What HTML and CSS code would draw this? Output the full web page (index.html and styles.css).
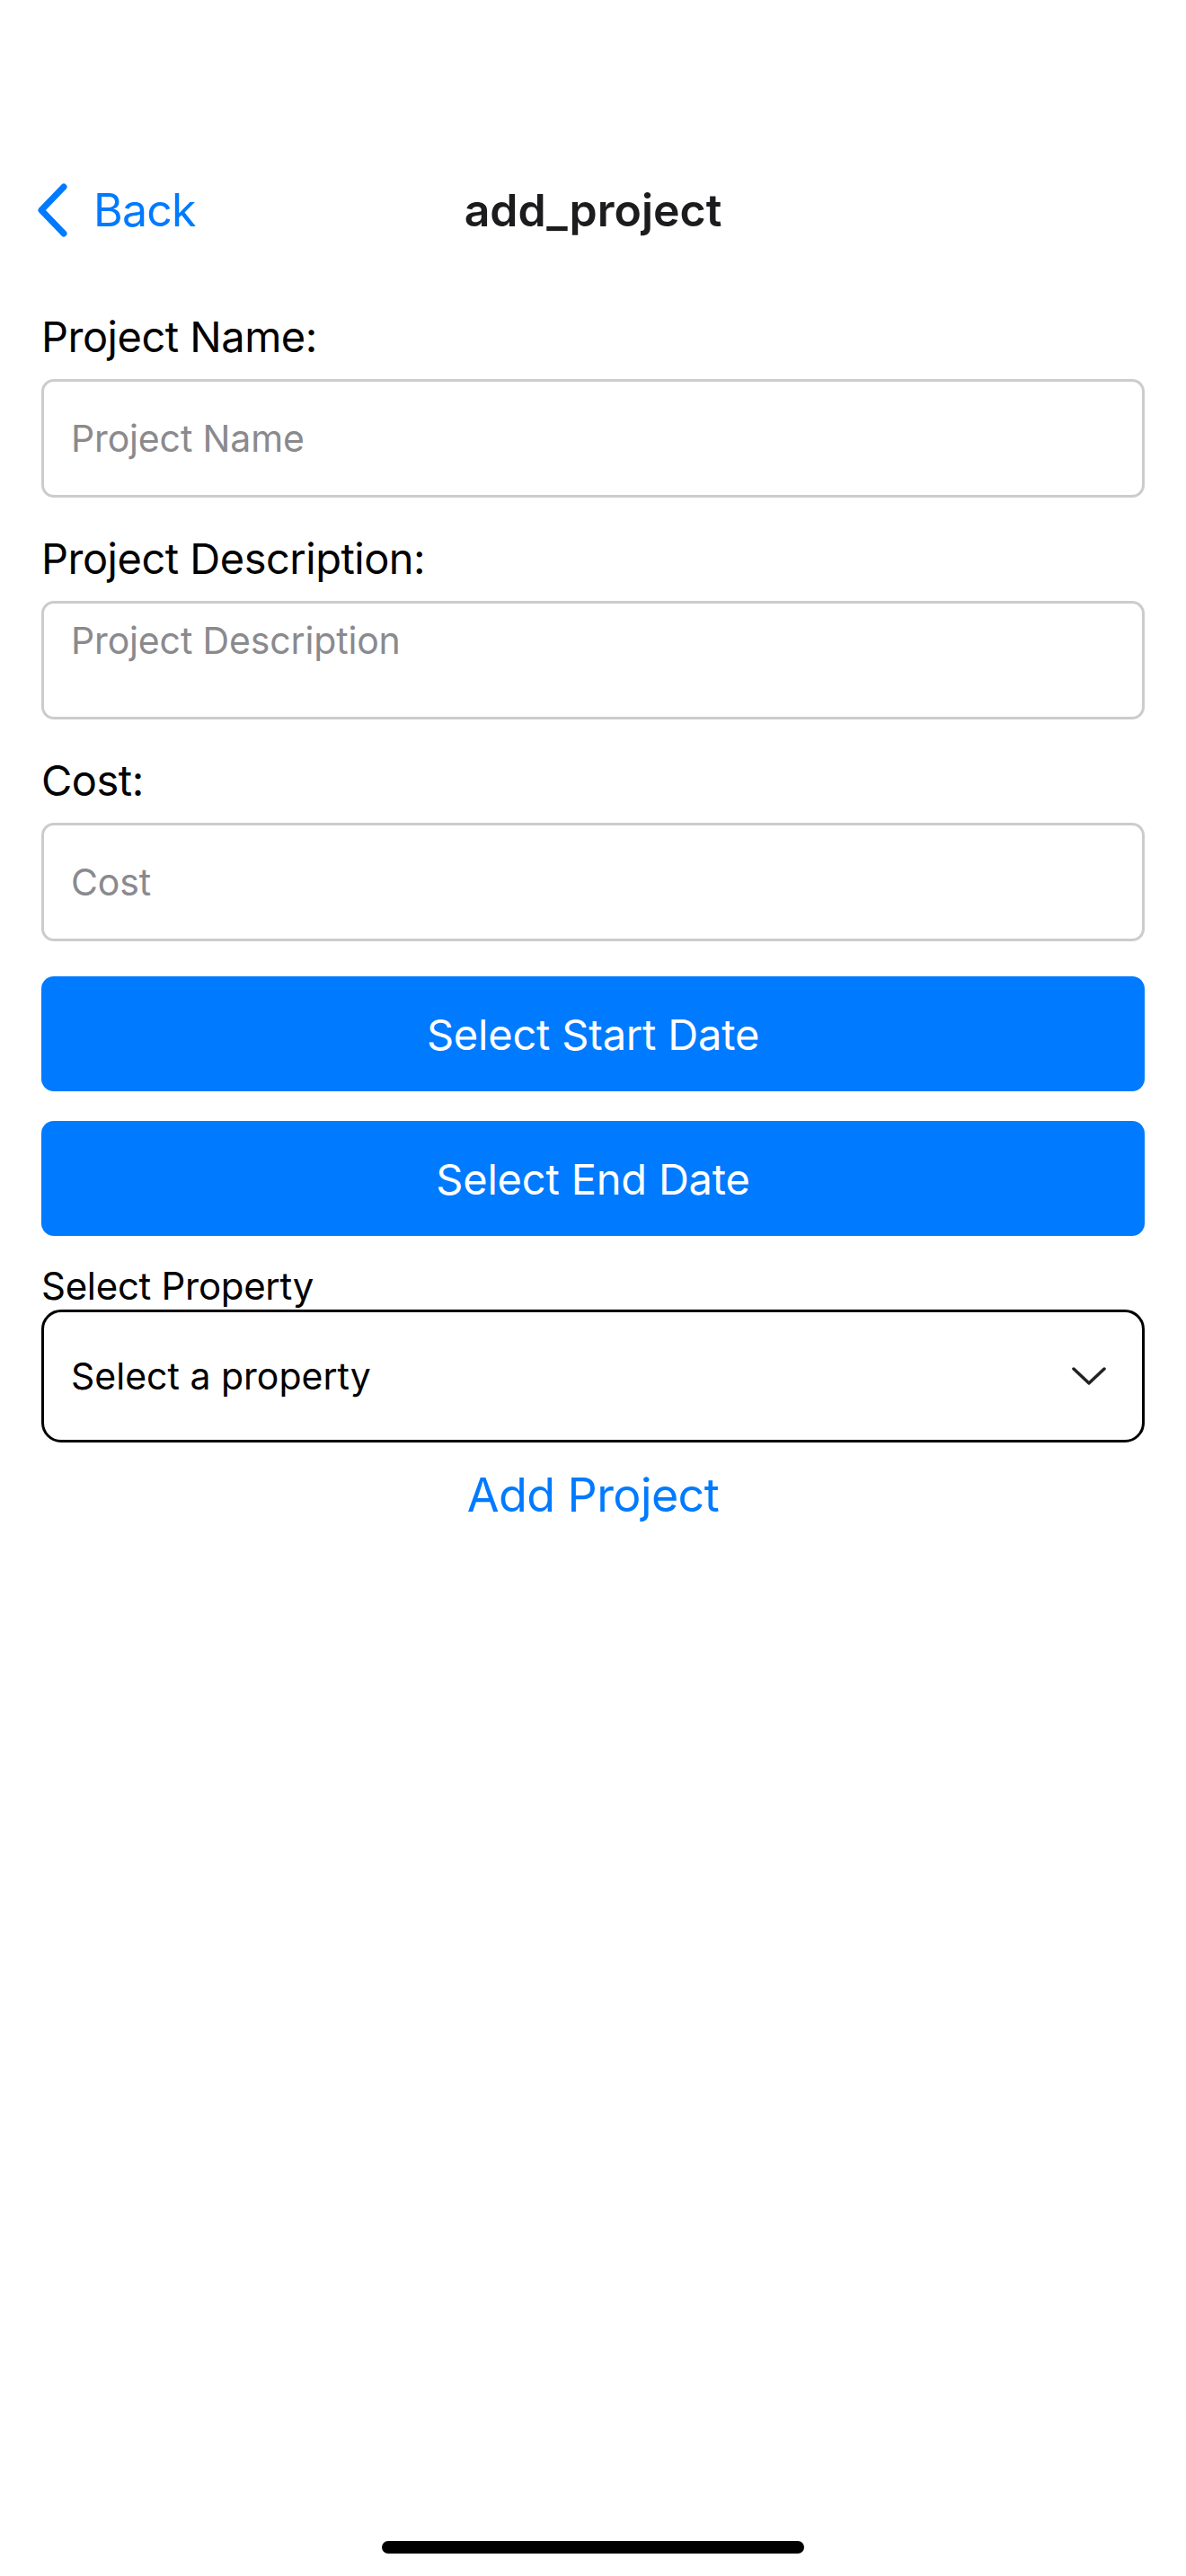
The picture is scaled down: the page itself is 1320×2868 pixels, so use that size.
FILE: index.html
```html
<!DOCTYPE html>
<html lang="en">
<head>
<meta charset="utf-8">
<title>add_project</title>
<link rel="stylesheet" href="styles.css">
</head>
<body>
<div class="screen">
  <header class="nav">
    <div class="nav-back">
      <svg class="chev" width="40" height="60" viewBox="0 0 40 60"><path d="M31 4 L6 30 L31 56" fill="none" stroke="#007AFF" stroke-width="7" stroke-linecap="round" stroke-linejoin="round"/></svg>
      <span class="back-text">Back</span>
    </div>
    <div class="nav-title">add_project</div>
    <div class="nav-spacer"></div>
  </header>

  <main class="form">
    <label class="label l1">Project Name:</label>
    <div class="input"><span class="ph">Project Name</span></div>

    <label class="label">Project Description:</label>
    <div class="input multi"><span class="ph">Project Description</span></div>

    <label class="label">Cost:</label>
    <div class="input"><span class="ph">Cost</span></div>

    <div class="btn b1">Select Start Date</div>
    <div class="btn b2">Select End Date</div>

    <label class="small-label">Select Property</label>
    <div class="select">
      <span class="select-text">Select a property</span>
      <svg width="40" height="24" viewBox="0 0 40 24"><path d="M3 4 L20 20 L37 4" fill="none" stroke="#222" stroke-width="3.5" stroke-linecap="round" stroke-linejoin="round"/></svg>
    </div>

    <div class="add">Add Project</div>
  </main>

  <div class="home-indicator"></div>
</div>
</body>
</html>
```

FILE: styles.css
```css
html, body {
  margin: 0;
  padding: 0;
  background: #ffffff;
}
body {
  font-family: "Inter", "Liberation Sans", sans-serif;
  color: #000;
}
.screen {
  width: 1320px;
  height: 2868px;
  display: flex;
  flex-direction: column;
  position: relative;
  overflow: hidden;
}
.nav {
  margin-top: 168px;
  height: 132px;
  display: flex;
  align-items: center;
  justify-content: space-between;
  padding: 0 40px;
}
.nav-back {
  display: flex;
  align-items: center;
  width: 240px;
}
.chev {
  display: block;
}
.back-text {
  color: #007AFF;
  font-size: 50px;
  margin-left: 24px;
  letter-spacing: -0.8px;
}
.nav-title {
  font-size: 50px;
  font-weight: 600;
  color: #1c1c1e;
  letter-spacing: 0px;
}
.nav-spacer {
  width: 240px;
}
.form {
  padding: 0 46px;
  display: flex;
  flex-direction: column;
}
.label {
  font-size: 47px;
  line-height: 58px;
  height: 58px;
  letter-spacing: -0.5px;
  margin-top: 39px;
  margin-bottom: 18px;
}
.label.l1 {
  margin-top: 46px;
}
.input {
  height: 132px;
  box-sizing: border-box;
  border: 3px solid #cccccc;
  border-radius: 14px;
  padding: 0 30px;
  display: flex;
  align-items: center;
}
.input.multi {
  align-items: flex-start;
  padding-top: 16px;
}
.ph {
  color: #8a8a8e;
  font-size: 41px;
  letter-spacing: -0.15px;
}
.btn {
  height: 128px;
  background: #007AFF;
  border-radius: 14px;
  color: #fff;
  font-size: 47px;
  letter-spacing: -0.2px;
  display: flex;
  align-items: center;
  justify-content: center;
}
.b1 { margin-top: 39px; }
.b2 { margin-top: 33px; }
.small-label {
  font-size: 42px;
  line-height: 50px;
  height: 50px;
  margin-top: 31px;
  letter-spacing: -0.3px;
}
.select {
  margin-top: 1px;
  height: 148px;
  box-sizing: border-box;
  border: 3px solid #000;
  border-radius: 22px;
  padding: 0 39px 0 30px;
  display: flex;
  align-items: center;
  justify-content: space-between;
}
.select-text {
  font-size: 41px;
  letter-spacing: 0px;
}
.add {
  margin-top: 27px;
  text-align: center;
  color: #007AFF;
  font-size: 52px;
  line-height: 64px;
  letter-spacing: -0.6px;
}
.home-indicator {
  position: absolute;
  left: 425px;
  top: 2829px;
  width: 470px;
  height: 14px;
  border-radius: 7px;
  background: #000;
}
```
